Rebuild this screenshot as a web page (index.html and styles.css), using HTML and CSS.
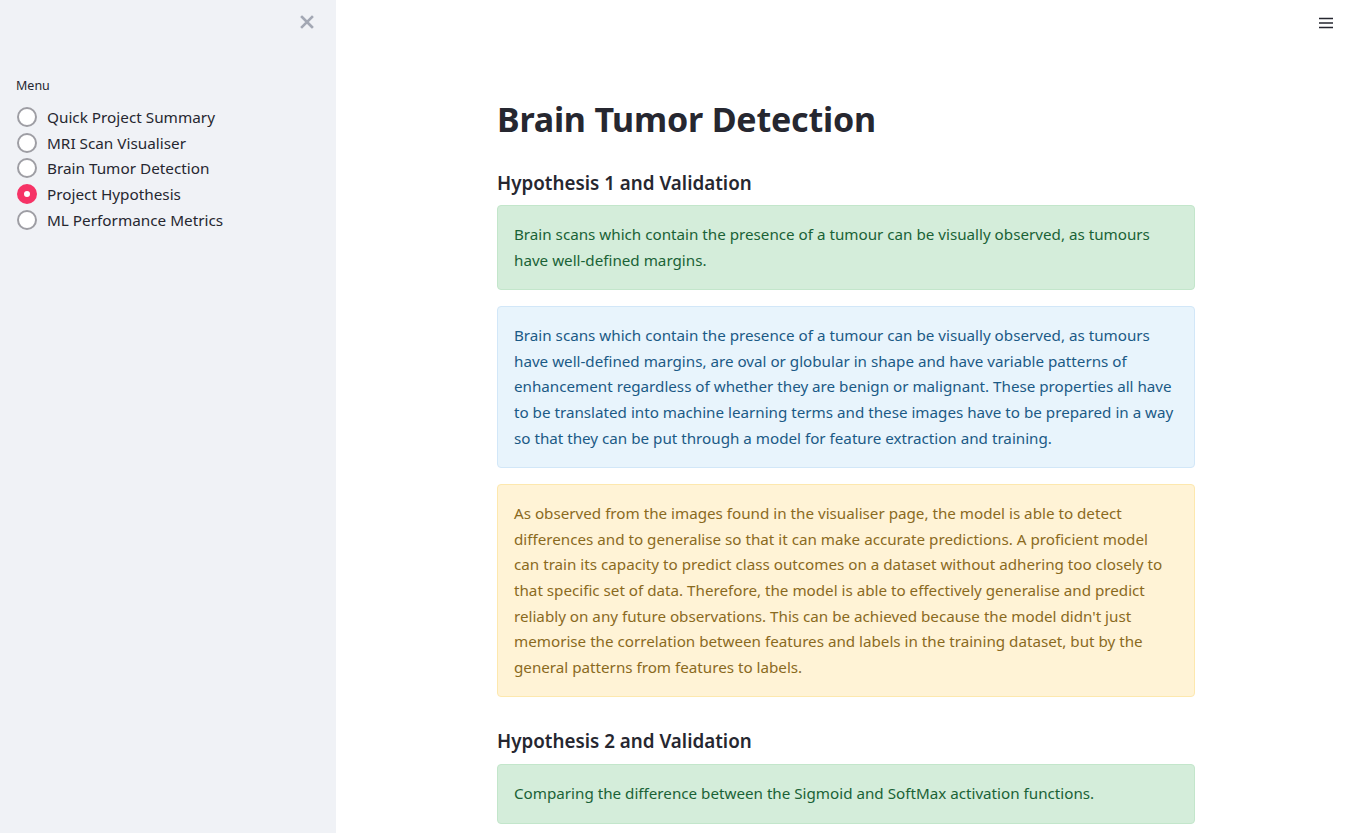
FILE: index.html
```html
<!DOCTYPE html>
<html lang="en">
<head>
<meta charset="utf-8">
<title>Brain Tumor Detection</title>
<link rel="stylesheet" href="styles.css">
</head>
<body>
<div class="app">
  <aside class="sidebar">
    <div class="sidebar-top">
      <button class="close" aria-label="Close sidebar">
        <svg width="14" height="14" viewBox="0 0 14 14"><path d="M2 2 L12 12 M12 2 L2 12" stroke="#a3a8b4" stroke-width="2.6" stroke-linecap="square"/></svg>
      </button>
    </div>
    <div class="menu-label">Menu</div>
    <ul class="radios">
      <li class="radio"><span class="dot"></span>Quick Project Summary</li>
      <li class="radio"><span class="dot"></span>MRI Scan Visualiser</li>
      <li class="radio"><span class="dot"></span>Brain Tumor Detection</li>
      <li class="radio selected"><span class="dot"></span>Project Hypothesis</li>
      <li class="radio"><span class="dot"></span>ML Performance Metrics</li>
    </ul>
  </aside>
  <main class="main">
    <div class="topbar">
      <button class="hamburger" aria-label="Menu">
        <svg width="14" height="12" viewBox="0 0 14 12"><path d="M0 1.5 H14 M0 6 H14 M0 10.5 H14" stroke="#262730" stroke-width="1.6"/></svg>
      </button>
    </div>
    <div class="block">
      <h1>Brain Tumor Detection</h1>
      <h3>Hypothesis 1 and Validation</h3>
      <div class="alert success">Brain scans which contain the presence of a tumour can be visually observed, as tumours have well-defined margins.</div>
      <div class="alert info">Brain scans which contain the presence of a tumour can be visually observed, as tumours have well-defined margins, are oval or globular in shape and have variable patterns of enhancement regardless of whether they are benign or malignant. These properties all have to be translated into machine learning terms and these images have to be prepared in a way so that they can be put through a model for feature extraction and training.</div>
      <div class="alert warning">As observed from the images found in the visualiser page, the model is able to detect differences and to generalise so that it can make accurate predictions. A proficient model can train its capacity to predict class outcomes on a dataset without adhering too closely to that specific set of data. Therefore, the model is able to effectively generalise and predict reliably on any future observations. This can be achieved because the model didn't just memorise the correlation between features and labels in the training dataset, but by the general patterns from features to labels.</div>
      <h3 class="h3-second">Hypothesis 2 and Validation</h3>
      <div class="alert success">Comparing the difference between the Sigmoid and SoftMax activation functions.</div>
    </div>
  </main>
</div>
</body>
</html>
```
FILE: styles.css
```css
* { box-sizing: border-box; }
html, body { margin: 0; padding: 0; height: 100%; overflow: hidden; }
body {
  font-family: "Noto Sans", "Liberation Sans", sans-serif;
  color: #262730;
  background: #fff;
}
.app { display: flex; height: 833px; }
.sidebar {
  width: 336px;
  flex: none;
  background: #f0f2f6;
  padding: 0 16px;
}
.sidebar-top { display: flex; justify-content: flex-end; height: 78px; padding-top: 15px; padding-right: 6px; }
.close { background: none; border: 0; padding: 0; width: 14px; height: 14px; cursor: pointer; }
.close svg { display: block; }
.menu-label { font-size: 12.5px; line-height: 16px; color: #262730; margin-bottom: 10px; }
.radios { list-style: none; margin: 0; padding: 0; }
.radio {
  display: flex; align-items: center;
  height: 25.7px;
  font-size: 15.3px;
  color: #262730;
}
.dot {
  width: 20px; height: 20px; border-radius: 50%;
  border: 2px solid #9e9ea4;
  background: #fff;
  margin-left: 1px;
  margin-right: 10px;
  flex: none;
}
.radio.selected .dot {
  border: 7px solid #f63366;
  background: #fff;
}
.main { flex: 1; position: relative; }
.topbar { display: flex; justify-content: flex-end; height: 0; }
.hamburger { position: absolute; top: 17px; right: 23px; background: none; border: 0; padding: 0; }
.hamburger svg { display: block; }
.block { width: 698px; margin: 0 auto; padding-top: 96px; }
h1 {
  font-size: 34px; font-weight: 700; line-height: 46px; margin: 0 0 27px;
  letter-spacing: -0.2px;
}
h3 { font-size: 18.8px; font-weight: 600; line-height: 28px; margin: 0 0 8px; }
.h3-second { margin-top: 30px; margin-bottom: 9px; }
.alert {
  border: 1px solid; border-radius: 4px;
  padding: 16px;
  font-size: 15.2px; line-height: 25.6px;
  margin-bottom: 16px;
}
.success { background: #d4edda; border-color: #c3e6cb; color: #1a6236; }
.info { background: #e8f4fc; border-color: #d2e7f8; color: #1b5a86; }
.warning { background: #fff3d6; border-color: #fde8ae; color: #8a6a1e; padding-right: 22px; }
```
